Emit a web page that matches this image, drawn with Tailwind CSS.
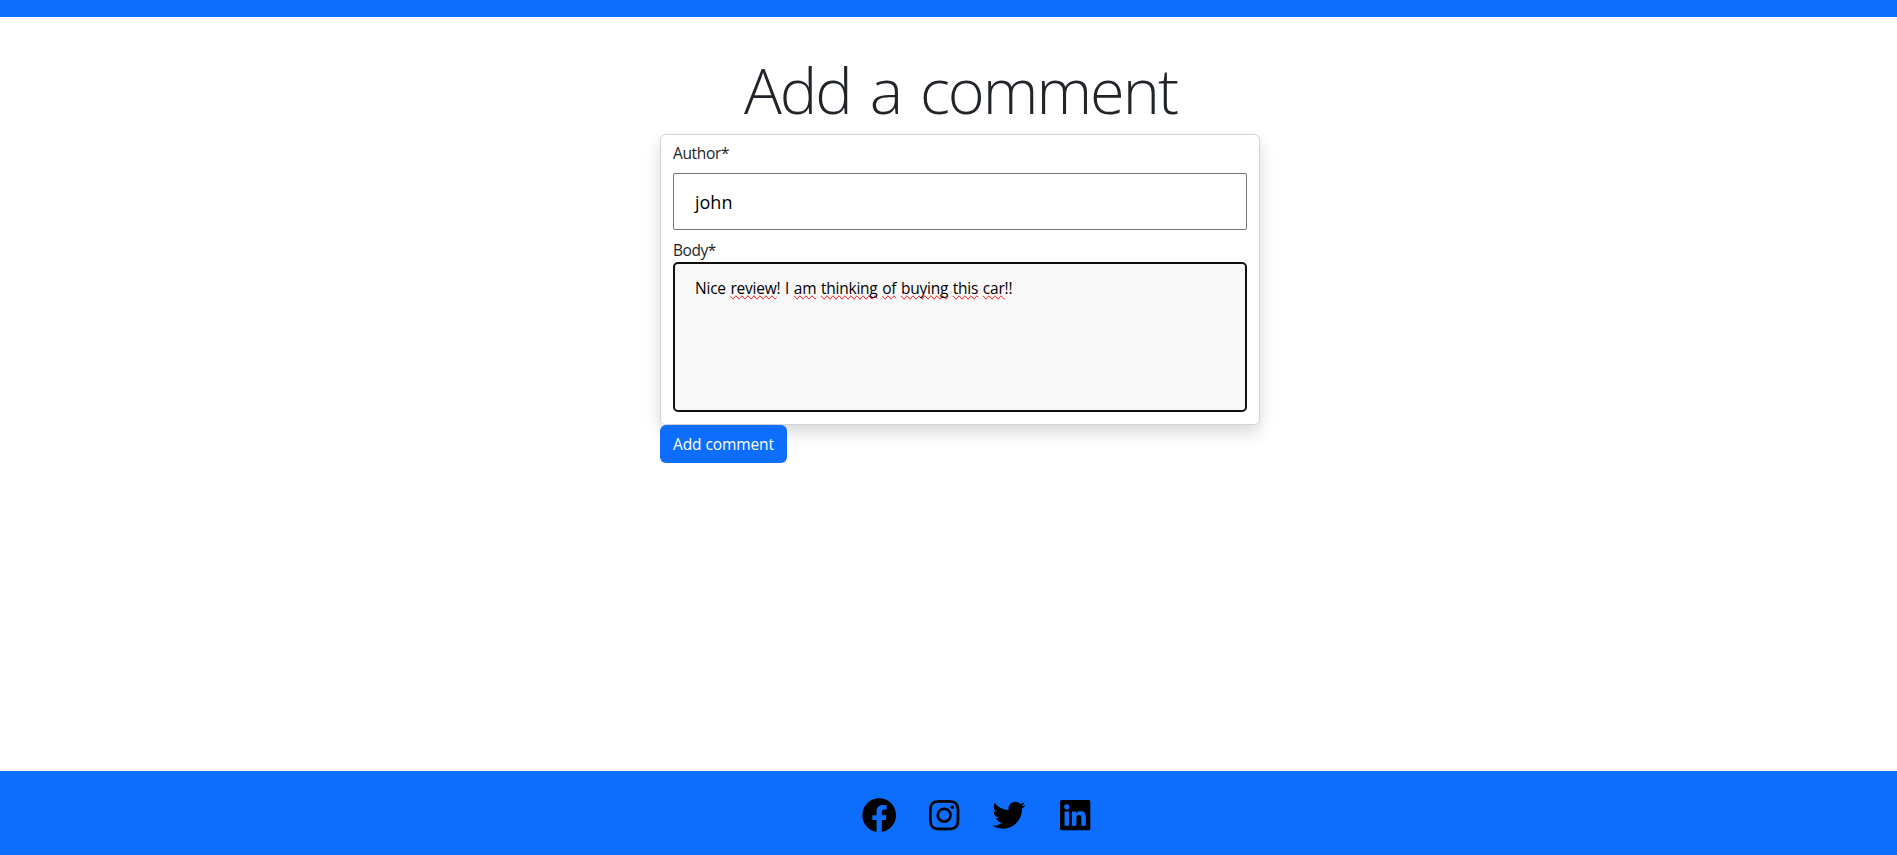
<!DOCTYPE html>
<html lang="en">
<head>
<meta charset="utf-8">
<title>Add a comment</title>
<script src="https://cdn.jsdelivr.net/npm/@tailwindcss/browser@4"></script>
</head>
<body class="flex h-[855px] flex-col overflow-hidden bg-white font-['Open_Sans','Noto_Sans',sans-serif] text-base text-[#212529]">
<header class="h-[17px] shrink-0 bg-[#0d6efd]"></header>
<main class="flex grow flex-col items-center pt-[35px] pl-[23px]">
  <h1 class="h-[82px] pl-[1px] text-[63px] leading-[76px] font-light whitespace-nowrap tracking-[-2px] [word-spacing:4.5px]">Add a comment</h1>
  <form class="w-[600px]">
    <div class="h-[291px] rounded-md border border-[#ced4da] bg-white px-3 pt-[6px] shadow-[0_8px_16px_rgba(0,0,0,0.15)]">
      <div class="h-[32px] text-[15.5px] leading-6"><span class="tracking-[-0.35px]">Author*</span></div>
      <div class="flex h-[57px] items-center rounded-[2px] border border-[#767676] pt-[2px] pl-[21px] text-[18px] text-black"><span>john</span></div>
      <div class="mt-[8px] h-[24px] text-[15.5px] leading-6"><span class="tracking-[-0.45px]">Body*</span></div>
      <div class="h-[150px] rounded-[5px] border-2 border-[#101010] bg-[#f8f8f8] pt-[12px] pl-[20px] text-[15.5px] leading-6 whitespace-nowrap text-black">
        <span class="tracking-[-0.22px] [word-spacing:0.8px]">Nice <u class="[text-decoration-line:spelling-error]">review</u>! I <u class="[text-decoration-line:spelling-error]">am</u> <u class="[text-decoration-line:spelling-error]">thinking</u> <u class="[text-decoration-line:spelling-error]">of</u> <u class="[text-decoration-line:spelling-error]">buying</u> <u class="[text-decoration-line:spelling-error]">this</u> <u class="[text-decoration-line:spelling-error]">car</u>!!</span>
      </div>
    </div>
    <button type="button" class="relative block h-[38px] w-[127px] rounded-md bg-[#0d6efd] pl-[13px] text-left text-[15.5px] leading-6 tracking-[-0.1px] whitespace-nowrap text-white">Add comment</button>
  </form>
</main>
<footer class="flex h-[84px] shrink-0 justify-center gap-[24.8px] bg-[#0d6efd] pt-[23.7px] pl-[57px] text-black">
  <svg class="size-[40.4px]" viewBox="0 0 24 24" fill="currentColor"><path d="M12.001 2.002c-5.522 0-9.999 4.477-9.999 9.999 0 4.99 3.656 9.126 8.437 9.879v-6.988h-2.54v-2.891h2.54V9.798c0-2.508 1.493-3.891 3.776-3.891 1.094 0 2.24.195 2.24.195v2.459h-1.264c-1.24 0-1.628.772-1.628 1.563v1.875h2.771l-.443 2.891h-2.328v6.988C18.344 21.129 22 16.992 22 12.001c0-5.522-4.477-9.999-9.999-9.999z"/></svg>
  <svg class="size-[40.4px]" viewBox="0 0 24 24" fill="currentColor"><path d="M11.999 7.377a4.623 4.623 0 1 0 0 9.248 4.623 4.623 0 0 0 0-9.248zm0 7.627a3.004 3.004 0 1 1 0-6.008 3.004 3.004 0 0 1 0 6.008z"/><circle cx="16.806" cy="7.207" r="1.078"/><path d="M20.533 6.111A4.605 4.605 0 0 0 17.9 3.479a6.606 6.606 0 0 0-2.186-.42c-.963-.042-1.268-.054-3.71-.054s-2.755 0-3.71.054a6.554 6.554 0 0 0-2.184.42 4.6 4.6 0 0 0-2.633 2.632 6.585 6.585 0 0 0-.419 2.186c-.043.962-.056 1.267-.056 3.71 0 2.442 0 2.753.056 3.71.015.748.156 1.486.419 2.187a4.61 4.61 0 0 0 2.634 2.632 6.584 6.584 0 0 0 2.185.45c.963.042 1.268.055 3.71.055s2.755 0 3.71-.055a6.615 6.615 0 0 0 2.186-.419 4.613 4.613 0 0 0 2.633-2.633c.263-.7.404-1.438.419-2.186.043-.962.056-1.267.056-3.71s0-2.753-.056-3.71a6.581 6.581 0 0 0-.421-2.217zm-1.218 9.532a5.043 5.043 0 0 1-.311 1.688 2.987 2.987 0 0 1-1.712 1.711 4.985 4.985 0 0 1-1.67.311c-.95.044-1.218.055-3.654.055-2.438 0-2.687 0-3.655-.055a4.96 4.96 0 0 1-1.669-.311 2.985 2.985 0 0 1-1.719-1.711 5.08 5.08 0 0 1-.311-1.669c-.043-.95-.053-1.218-.053-3.654 0-2.437 0-2.686.053-3.655a5.038 5.038 0 0 1 .311-1.687c.305-.789.93-1.41 1.719-1.712a5.01 5.01 0 0 1 1.669-.311c.951-.043 1.218-.055 3.655-.055s2.687 0 3.654.055a4.96 4.96 0 0 1 1.67.311 2.991 2.991 0 0 1 1.712 1.712 5.08 5.08 0 0 1 .311 1.669c.043.951.055 1.218.055 3.655 0 2.436 0 2.698-.043 3.654h-.011z"/></svg>
  <svg class="size-[40.4px]" viewBox="0 0 24 24" fill="currentColor"><path d="M19.633 7.997c.013.175.013.349.013.523 0 5.325-4.053 11.461-11.46 11.461-2.282 0-4.402-.661-6.186-1.809.324.037.636.05.973.05a8.07 8.07 0 0 0 5.001-1.721 4.036 4.036 0 0 1-3.767-2.793c.249.037.499.062.761.062.361 0 .724-.05 1.061-.137a4.027 4.027 0 0 1-3.23-3.953v-.05c.537.299 1.16.486 1.82.511a4.022 4.022 0 0 1-1.796-3.354c0-.748.199-1.434.548-2.032a11.457 11.457 0 0 0 8.306 4.215c-.062-.3-.1-.611-.1-.923a4.026 4.026 0 0 1 4.028-4.028c1.16 0 2.207.486 2.943 1.272a7.957 7.957 0 0 0 2.556-.973 4.02 4.02 0 0 1-1.771 2.22 8.073 8.073 0 0 0 2.319-.624 8.645 8.645 0 0 1-2.019 2.083z"/></svg>
  <svg class="size-[40.4px]" viewBox="0 0 24 24" fill="currentColor"><path d="M20 3H4a1 1 0 0 0-1 1v16a1 1 0 0 0 1 1h16a1 1 0 0 0 1-1V4a1 1 0 0 0-1-1zM8.339 18.337H5.667v-8.59h2.672v8.59zM7.003 8.574a1.548 1.548 0 1 1 0-3.096 1.548 1.548 0 0 1 0 3.096zm11.335 9.763h-2.669V14.16c0-.996-.018-2.277-1.388-2.277-1.39 0-1.601 1.086-1.601 2.207v4.248h-2.667v-8.59h2.56v1.174h.037c.355-.675 1.227-1.387 2.524-1.387 2.704 0 3.203 1.778 3.203 4.092v4.71z"/></svg>
</footer>
</body>
</html>
